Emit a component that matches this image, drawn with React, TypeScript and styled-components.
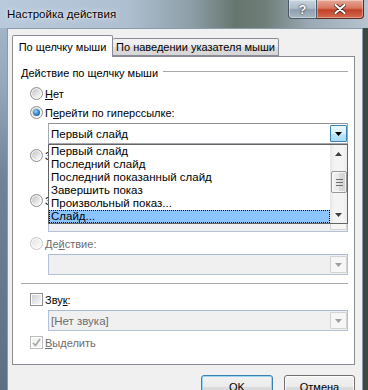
import React from 'react'
import styled, { createGlobalStyle } from 'styled-components'


const UI_FONT = `"Liberation Sans", Arial, sans-serif`
const TAB_BORDER = '#898c95'
const GRAY_TEXT = '#6d6d6d'


const GlobalStyle = createGlobalStyle`
  html, body {
    margin: 0;
    padding: 0;
    background: #5f7186;
  }
  body {
    font-family: ${UI_FONT};
    font-size: 11px;
    color: #000;
  }
  * { box-sizing: border-box; }
`


const Window = styled.div`
  width: 368px;
  height: 390px;
  overflow: hidden;
  display: flex;
  flex-direction: column;
  background:
    linear-gradient(90deg, transparent 363px, #3e4843 363px),
    linear-gradient(180deg, #a9bbcd 0px, #93a6ba 90px, #6f8298 180px, #5d6f84 390px);
`

const TitleBar = styled.div`
  height: 28px;
  flex: none;
  display: flex;
  align-items: flex-start;
  background: linear-gradient(90deg,
    #b8cadc 0%, #adbfd0 35%, #8d9ea8 52%, #66766e 64%,
    #6f7e78 72%, #9aa9b4 84%, #b6c4cf 100%);
`

const Title = styled.div`
  padding: 8px 0 0 7px;
  font-size: 11.5px;
  text-shadow: 0 0 6px rgba(255, 255, 255, .9), 0 0 2px rgba(255, 255, 255, .8);
`

const CaptionButtons = styled.div`
  margin-left: auto;
  margin-right: 4px;
  display: flex;
`

const CaptionButton = styled.div<{ $close?: boolean }>`
  width: ${p => p.$close ? 47 : 29}px;
  height: 19px;
  display: flex;
  align-items: center;
  justify-content: center;
  border: 1px solid ${p => p.$close ? '#5e2a1f' : '#4b5866'};
  border-top: none;
  border-left: ${p => p.$close ? 'none' : undefined};
  border-radius: ${p => p.$close ? '0 0 4px 0' : '0 0 0 4px'};
  background: ${p => p.$close
    ? 'linear-gradient(180deg, #e7a898 0%, #d8765f 45%, #c2402a 55%, #d46a50 100%)'
    : 'linear-gradient(180deg, #c9d4de 0%, #aebdca 45%, #8e9eae 55%, #a9b8c4 100%)'};
  box-shadow: inset 0 0 0 1px rgba(255, 255, 255, .35);
  color: #fff;
  font: bold 13px ${UI_FONT};
  text-shadow: 0 0 2px #334, 0 0 1px #223;
`


const Client = styled.div`
  flex: 1;
  margin: 0 5px 0 7px;
  padding: 6px 7px 0 4px;
  display: flex;
  flex-direction: column;
  background: #f0f0f0;
  border: 1px solid #8b9aab;
  border-bottom: none;
`

const TabStrip = styled.div`
  height: 22px;
  display: flex;
  align-items: flex-end;
  margin-bottom: -1px;
  position: relative;
  z-index: 1;
`

const Tab = styled.div<{ $active?: boolean }>`
  width: ${p => p.$active ? 101 : 166}px;
  height: ${p => p.$active ? 22 : 18}px;
  margin-bottom: ${p => p.$active ? 0 : 1}px;
  display: flex;
  align-items: center;
  justify-content: center;
  border: 1px solid ${TAB_BORDER};
  border-bottom: ${p => p.$active ? 'none' : `1px solid ${TAB_BORDER}`};
  border-left: ${p => p.$active ? `1px solid ${TAB_BORDER}` : 'none'};
  border-radius: 2px 2px 0 0;
  background: ${p => p.$active
    ? '#fff'
    : 'linear-gradient(180deg, #f2f2f2 0%, #ebebeb 50%, #dddddd 50%, #d6d6d6 100%)'};
  white-space: nowrap;
`

const Pane = styled.div`
  height: 309px;
  flex: none;
  display: flex;
  flex-direction: column;
  padding: 7px 6px 0 8px;
  background: #fff;
  border: 1px solid ${TAB_BORDER};
`


const GroupHeader = styled.div`
  height: 18px;
  display: flex;
  align-items: center;
  gap: 5px;
  white-space: nowrap;

  &::after {
    content: '';
    flex: 1;
    height: 1px;
    margin-bottom: 3px;
    background: #a8a8a8;
  }
`

const Separator = styled.div<{ $top: number }>`
  height: 1px;
  flex: none;
  margin-top: ${p => p.$top}px;
  background: #a8a8a8;
`

const OptionRow = styled.div<{ $top?: number; $disabled?: boolean }>`
  height: 19px;
  flex: none;
  margin-top: ${p => p.$top ?? 0}px;
  padding-left: 9px;
  display: flex;
  align-items: center;
  gap: 2px;
  white-space: nowrap;
  color: ${p => p.$disabled ? GRAY_TEXT : '#000'};
`

const Key = styled.span`
  text-decoration: underline;
`

const Radio = styled.span<{ $checked?: boolean; $disabled?: boolean }>`
  position: relative;
  width: 13px;
  height: 13px;
  flex: none;
  border-radius: 50%;
  border: 1px solid ${p => p.$disabled ? '#c4c4c4' : '#8e8f8f'};
  background: ${p => p.$disabled
    ? 'linear-gradient(135deg, #e2e2e2, #f6f6f6 70%, #fcfcfc)'
    : 'linear-gradient(135deg, #bcbcbc, #ececec 65%, #ffffff)'};
  box-shadow: inset 0 0 0 1px rgba(255, 255, 255, .8);

  &::after {
    content: '';
    display: ${p => p.$checked ? 'block' : 'none'};
    position: absolute;
    inset: 2px;
    border-radius: 50%;
    background: radial-gradient(circle at 40% 35%, #9fdcff 0%, #3a8ad0 45%, #17467c 100%);
  }
`

const CheckBox = styled.span<{ $disabled?: boolean }>`
  width: 13px;
  height: 13px;
  flex: none;
  display: flex;
  align-items: center;
  justify-content: center;
  border: 1px solid ${p => p.$disabled ? '#bcbcbc' : '#8e8f8f'};
  background: ${p => p.$disabled
    ? '#f4f4f4'
    : 'linear-gradient(135deg, #c9ccd1, #eeeeee 70%, #fafafa)'};
  box-shadow: inset 0 0 0 1px #fff;
`


const ComboBox = styled.div<{ $top?: number; $disabled?: boolean }>`
  position: relative;
  height: 21px;
  flex: none;
  margin: ${p => p.$top ?? 0}px 0 0 27px;
  padding-left: 2px;
  display: flex;
  align-items: center;
  border: 1px solid ${p => p.$disabled ? '#b3c3d5' : '#a4a7ad'};
  border-top-color: ${p => p.$disabled ? '#a9bbd0' : '#8f9296'};
  background: ${p => p.$disabled ? '#f0f0f0' : '#fff'};
  color: ${p => p.$disabled ? GRAY_TEXT : '#000'};
  white-space: nowrap;
`

const ComboText = styled.span`
  flex: 1;
  font-size: 11.5px;
`

const DropButton = styled.div<{ $state: 'hot' | 'disabled' }>`
  width: 17px;
  height: 17px;
  flex: none;
  display: flex;
  align-items: center;
  justify-content: center;
  border: 1px solid ${p => p.$state === 'hot' ? '#3c7fb1' : '#d3d3d3'};
  border-radius: 1px;
  background: ${p => p.$state === 'hot'
    ? 'linear-gradient(180deg, #eaf6fd 0%, #d9f0fc 50%, #bee6fd 50%, #a7d9f5 100%)'
    : '#f6f6f6'};
`

const FieldRow = styled.div<{ $top: number }>`
  height: 21px;
  flex: none;
  margin: ${p => p.$top}px 0 0 27px;
  display: flex;
  gap: 6px;
`

const TextBox = styled.div`
  flex: 1;
  border: 1px solid #b3c3d5;
  background: #f0f0f0;
`

const SmallButton = styled.div`
  width: 75px;
  display: flex;
  align-items: center;
  justify-content: center;
  border: 1px solid #adb2b5;
  border-radius: 3px;
  background: #f4f4f4;
  color: ${GRAY_TEXT};
`


const ListBox = styled.div`
  position: absolute;
  top: calc(100% + 1px);
  left: -1px;
  right: -1px;
  height: 80px;
  z-index: 5;
  display: grid;
  grid-template-columns: 1fr 17px;
  border: 1px solid #646464;
  background: #fff;
`

const ListItems = styled.ul`
  margin: 0;
  padding: 0;
  list-style: none;
  overflow: hidden;
`

const ListItem = styled.li<{ $selected?: boolean }>`
  height: 13px;
  line-height: 13px;
  padding-left: 2px;
  font-size: 11.5px;
  white-space: nowrap;
  color: #000;
  background: ${p => p.$selected ? '#8cc4ff' : 'transparent'};
  outline: ${p => p.$selected ? '1px dotted #000' : 'none'};
  outline-offset: -1px;
`

const ScrollBar = styled.div`
  display: flex;
  flex-direction: column;
  background: linear-gradient(90deg, #e6e6e6 0%, #f4f4f4 25%, #f4f4f4 75%, #ebebeb 100%);
`

const ScrollArrow = styled.div`
  height: 17px;
  flex: none;
  display: flex;
  align-items: center;
  justify-content: center;
`

const ScrollTrack = styled.div`
  flex: 1;
  padding: 9px 0 0 1px;
`

const Thumb = styled.div`
  height: 22px;
  display: flex;
  align-items: center;
  justify-content: center;
  border: 1px solid #979797;
  border-radius: 2px;
  background: linear-gradient(90deg, #f3f3f3 0%, #e9e9e9 50%, #dcdcdc 51%, #d2d2d2 100%);
  box-shadow: inset 0 0 0 1px rgba(255, 255, 255, .7);
`


const ButtonRow = styled.div`
  display: flex;
  justify-content: flex-end;
  gap: 11px;
  margin-top: 10px;
`

const DialogButton = styled.div<{ $default?: boolean }>`
  width: ${p => p.$default ? 72 : 71}px;
  height: 23px;
  flex: none;
  display: flex;
  align-items: center;
  justify-content: center;
  border: 1px solid ${p => p.$default ? '#3c7fb1' : '#707070'};
  border-radius: 3px;
  background: linear-gradient(180deg, #f2f2f2 0%, #ebebeb 50%, #dddddd 50%, #cfcfcf 100%);
  box-shadow: inset 0 0 0 1px ${p => p.$default ? '#9cd4f4' : 'rgba(255, 255, 255, .8)'};
`


const Arrow: React.FC<{ up?: boolean; color?: string }> = ({ up, color = '#000' }) => (
  <svg width="7" height="4" viewBox="0 0 7 4">
    <path d={up ? 'M3.5 0 L7 4 L0 4 Z' : 'M0 0 L7 0 L3.5 4 Z'} fill={color} />
  </svg>
)

const Grip = () => (
  <svg width="7" height="7" viewBox="0 0 7 7">
    {[0, 3, 6].map(y =>
      <rect key={y} x="0" y={y} width="7" height="1" fill="#6e6e6e" />
    )}
  </svg>
)

const CloseGlyph = () => (
  <svg width="12" height="10" viewBox="0 0 12 10">
    <path d="M1.5 1 L10.5 9 M10.5 1 L1.5 9" stroke="#3a1a14" strokeWidth="3.6" strokeLinecap="round" />
    <path d="M1.5 1 L10.5 9 M10.5 1 L1.5 9" stroke="#fff" strokeWidth="2.2" strokeLinecap="round" />
  </svg>
)

const CheckMark = () => (
  <svg width="9" height="9" viewBox="0 0 9 9">
    <path d="M1 5 L3.5 7.5 L8 1" fill="none" stroke="#a6a6a6" strokeWidth="1.6" />
  </svg>
)


const HYPERLINK_TARGETS = [
  'Первый слайд',
  'Последний слайд',
  'Последний показанный слайд',
  'Завершить показ',
  'Произвольный показ...',
  'Слайд...',
]


const App: React.FC = function () {
  return (
    <>
      <GlobalStyle />
      <Window>
        <TitleBar>
          <Title>Настройка действия</Title>
          <CaptionButtons>
            <CaptionButton>?</CaptionButton>
            <CaptionButton $close><CloseGlyph /></CaptionButton>
          </CaptionButtons>
        </TitleBar>

        <Client>
          <TabStrip>
            <Tab $active>По щелчку мыши</Tab>
            <Tab>По наведении указателя мыши</Tab>
          </TabStrip>

          <Pane>
            <GroupHeader>Действие по щелчку мыши</GroupHeader>

            <OptionRow $top={2}>
              <Radio />
              <span><Key>Н</Key>ет</span>
            </OptionRow>
            <OptionRow>
              <Radio $checked />
              <span>П<Key>е</Key>рейти по гиперссылке:</span>
            </OptionRow>
            <ComboBox $top={1}>
              <ComboText>Первый слайд</ComboText>
              <DropButton $state="hot"><Arrow /></DropButton>

              <ListBox>
                <ListItems>
                  {HYPERLINK_TARGETS.map(t =>
                    <ListItem key={t} $selected={t === 'Слайд...'}>{t}</ListItem>
                  )}
                </ListItems>
                <ScrollBar>
                  <ScrollArrow><Arrow up color="#404040" /></ScrollArrow>
                  <ScrollTrack>
                    <Thumb><Grip /></Thumb>
                  </ScrollTrack>
                  <ScrollArrow><Arrow color="#404040" /></ScrollArrow>
                </ScrollBar>
              </ListBox>
            </ComboBox>

            <OptionRow $top={2}>
              <Radio />
              <span>Запуск программы:</span>
            </OptionRow>
            <FieldRow $top={2}>
              <TextBox />
              <SmallButton>Обзор...</SmallButton>
            </FieldRow>

            <OptionRow $top={3}>
              <Radio />
              <span>Запуск макроса:</span>
            </OptionRow>
            <ComboBox $top={1} $disabled>
              <ComboText />
              <DropButton $state="disabled"><Arrow color="#a0a0a0" /></DropButton>
            </ComboBox>

            <OptionRow $top={2} $disabled>
              <Radio $disabled />
              <span>Де<Key>й</Key>ствие:</span>
            </OptionRow>
            <ComboBox $top={1} $disabled>
              <ComboText />
              <DropButton $state="disabled"><Arrow color="#a0a0a0" /></DropButton>
            </ComboBox>

            <Separator $top={8} />

            <OptionRow $top={6}>
              <CheckBox />
              <span>Зву<Key>к</Key>:</span>
            </OptionRow>
            <ComboBox $top={1} $disabled>
              <ComboText>[Нет звука]</ComboText>
              <DropButton $state="disabled"><Arrow color="#a0a0a0" /></DropButton>
            </ComboBox>

            <OptionRow $top={2} $disabled>
              <CheckBox $disabled><CheckMark /></CheckBox>
              <span><Key>В</Key>ыделить</span>
            </OptionRow>
          </Pane>

          <ButtonRow>
            <DialogButton $default>OK</DialogButton>
            <DialogButton>Отмена</DialogButton>
          </ButtonRow>
        </Client>
      </Window>
    </>
  )
}


export default App
